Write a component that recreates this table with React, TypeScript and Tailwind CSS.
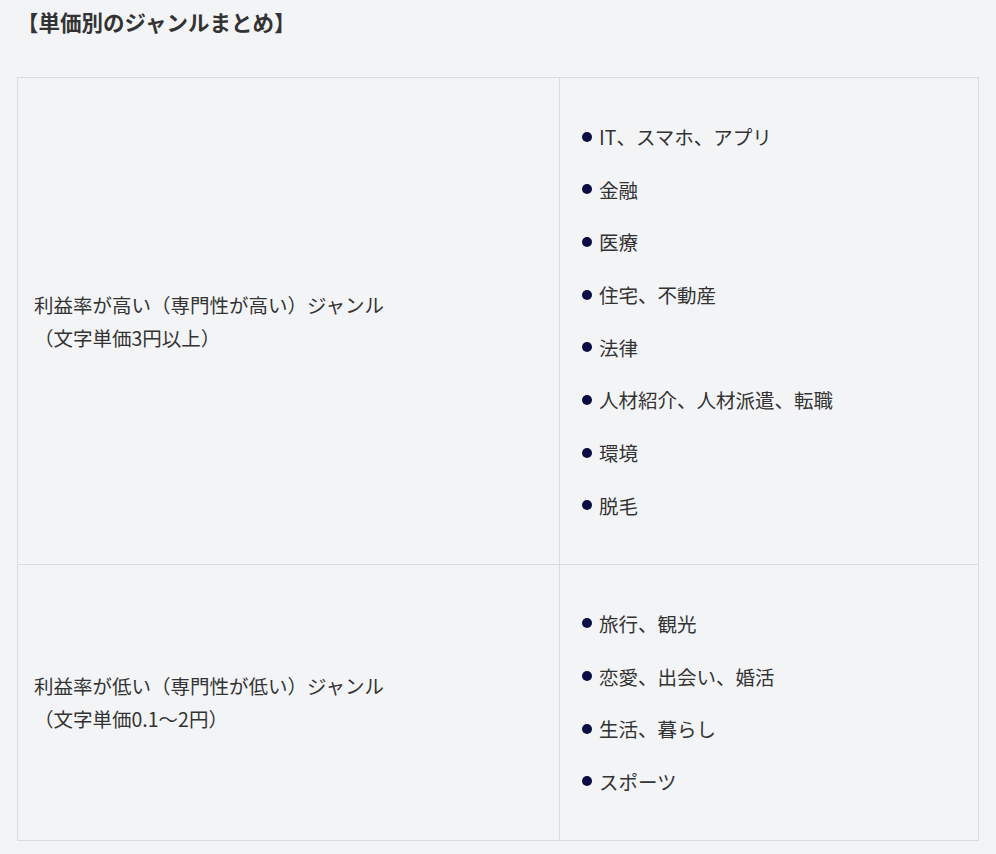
const rows = [
  {
    label: ["利益率が高い（専門性が高い）ジャンル", "（文字単価3円以上）"],
    items: ["IT、スマホ、アプリ", "金融", "医療", "住宅、不動産", "法律", "人材紹介、人材派遣、転職", "環境", "脱毛"],
  },
  {
    label: ["利益率が低い（専門性が低い）ジャンル", "（文字単価0.1〜2円）"],
    items: ["旅行、観光", "恋愛、出会い、婚活", "生活、暮らし", "スポーツ"],
  },
];

export default function App() {
  return (
    <div
      className="min-h-[854px] w-[996px] bg-[#f3f4f6] text-[#333333]"
      style={{ fontFamily: '"Noto Sans CJK JP", "Noto Sans", sans-serif' }}
    >
      <h3 className="px-[17px] pt-[7px] text-[21.5px] font-bold leading-[30px]">【単価別のジャンルまとめ】</h3>

      <table className="mt-[40px] ml-[17px] w-[962px] border-collapse text-[19.5px]">
        <tbody>
          {rows.map((row, i) => (
            <tr key={i}>
              <td className="w-[542px] border border-[#d9dbde] px-[16px] align-middle leading-[33px]">
                {row.label[0]}
                <br />
                {row.label[1]}
              </td>
              <td className="border border-[#d9dbde] pl-[22px] py-[42px] align-middle">
                <ul className="flex flex-col gap-[19.7px]">
                  {row.items.map((item) => (
                    <li key={item} className="flex items-center gap-[7px] leading-[33px]">
                      <span className="h-[10px] w-[10px] shrink-0 rounded-full bg-[#0c0c45]" />
                      <span>{item}</span>
                    </li>
                  ))}
                </ul>
              </td>
            </tr>
          ))}
        </tbody>
      </table>
    </div>
  );
}
